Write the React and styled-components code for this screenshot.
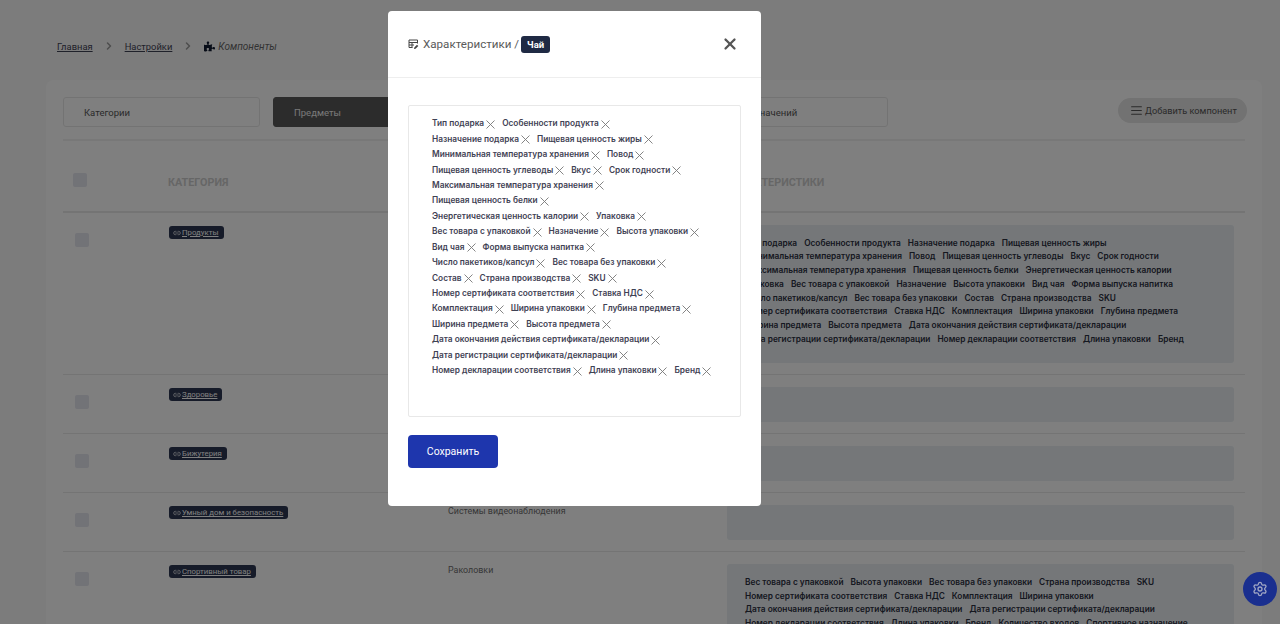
import React from 'react';
import styled, { createGlobalStyle } from 'styled-components';
import { AlignJustify, ChevronRight, Link2, Settings, X } from 'lucide-react';
import { FaPuzzlePiece } from 'react-icons/fa';

const Global = createGlobalStyle`
  html, body { margin: 0; height: 100%; overflow: hidden; background: #f9f9f9; }
  body { font-family: Roboto, "Liberation Sans", sans-serif; }
  * { box-sizing: border-box; }
`;

const Page = styled.div`
  height: 624px;
  overflow: hidden;
  padding: 39px 18px 0 46px;
`;
const Crumbs = styled.nav`
  display: flex;
  align-items: center;
  height: 14px;
  margin: 0 0 27px 11px;
  font-size: 9.4px;
  color: #3f4254;
`;
const CrumbLink = styled.a`
  text-decoration: underline;
`;
const CrumbSep = styled.span`
  display: flex;
  width: 32px;
  justify-content: center;
  color: #9a9a9a;
`;
const CrumbCurrent = styled.span`
  display: flex;
  align-items: center;
  gap: 3px;
  font-size: 10px;
  font-style: italic;
  color: #666;
  svg { color: #111a30; }
`;
const Card = styled.main`
  background: #fff;
  border-radius: 8px;
  padding: 17px 17px 0;
  height: 700px;
`;
const Toolbar = styled.div`
  display: flex;
  align-items: flex-start;
  justify-content: space-between;
  height: 44px;
  border-bottom: 2px solid #f0f0f0;
`;
const Tabs = styled.div`
  display: flex;
  gap: 13px;
`;
const Tab = styled.div`
  width: ${p => p.$w || 197}px;
  height: 30px;
  display: flex;
  align-items: center;
  padding-left: ${p => p.$pad || 20}px;
  font-size: 9.5px;
  border-radius: 3px;
  border: 1px solid ${p => (p.$active ? '#585858' : '#e7e7e7')};
  background: ${p => (p.$active ? '#585858' : '#fff')};
  color: ${p => (p.$active ? '#f0f0f0' : '#555')};
`;
const AddButton = styled.button`
  display: flex;
  flex: none;
  align-items: center;
  gap: 2px;
  height: 25px;
  width: 129px;
  margin: 1px -2px 0 0;
  padding: 0 0 0 12px;
  border: 0;
  border-radius: 13px;
  background: #e4e4e4;
  color: #555;
  white-space: nowrap;
  font: 9.2px Roboto, sans-serif;
`;
const grid = `
  display: grid;
  grid-template-columns: 105px 280px 279px 1fr;
`;
const HeadRow = styled.div`
  ${grid}
  height: 72px;
  align-items: center;
  border-bottom: 2px solid #e8e8e8;
`;
const HeadCell = styled.div`
  font-size: 10.8px;
  font-weight: 700;
  color: #cdcdcd;
  padding-top: 13px;
`;
const Check = styled.span`
  display: block;
  width: 14px;
  height: 14px;
  border-radius: 2px;
  background: #e4e6ef;
  margin-left: ${p => (p.$head ? 10 : 12)}px;
  margin-top: 8px;
`;
const Row = styled.div`
  ${grid}
  padding-top: 12px;
  padding-bottom: 11px;
  border-bottom: 1px solid #e8e8e8;
`;
const Cat = styled.div`
  display: flex;
  align-items: flex-start;
`;
const Chip = styled.a`
  display: inline-flex;
  align-items: center;
  gap: 1px;
  height: 13px;
  margin: 1px 0 0 1px;
  padding: 0 5px 0 4px;
  border-radius: 3px;
  background: #2c3652;
  color: #fff;
  font-size: 7.8px;
  line-height: 13px;
  text-decoration: underline;
`;
const Sub = styled.div`
  font-size: 8.9px;
  color: #6e6e6e;
  line-height: 12px;
`;
const ValueBox = styled.div`
  display: flex;
  flex-wrap: wrap;
  align-content: flex-start;
  column-gap: 7px;
  min-height: 35px;
  width: 507px;
  padding: ${p => (p.$filled ? '11.5px 18px 16.5px' : '0')};
  background: #eaeff3;
  border-radius: 3px;
`;
const ValueTag = styled.span`
  font-family: Inter, Roboto, sans-serif;
  font-size: 8.3px;
  font-weight: 600;
  line-height: 13.8px;
  color: #2b3040;
  white-space: nowrap;
`;
const Backdrop = styled.div`
  position: fixed;
  inset: 0;
  background: rgba(0, 0, 0, 0.5);
`;
const Modal = styled.section`
  position: fixed;
  left: 388px;
  top: 11px;
  width: 373px;
  height: 495px;
  background: #fff;
  border-radius: 4px;
`;
const ModalHeader = styled.header`
  display: flex;
  align-items: center;
  justify-content: space-between;
  height: 67px;
  padding: 0 22px 0 20px;
  border-bottom: 1px solid #eee;
`;
const Title = styled.h2`
  display: flex;
  align-items: center;
  margin: 0;
  font-size: 11.6px;
  font-weight: 400;
  color: #5a5a5a;
  svg { margin-right: 4px; }
`;
const TitleChip = styled.span`
  display: inline-flex;
  align-items: center;
  height: 17px;
  margin-left: 2px;
  padding: 0 6px;
  border-radius: 3px;
  background: #1f2a44;
  color: #fff;
  font-size: 9.5px;
  font-weight: 700;
`;
const CloseBtn = styled.button`
  display: flex;
  border: 0;
  padding: 0;
  background: none;
  color: #555;
`;
const ModalBody = styled.div`
  padding: 27px 20px 0;
`;
const TagField = styled.div`
  height: 312px;
  padding: 9.5px 19px 0 23px;
  border: 1px solid #e8e8e8;
  border-radius: 2px;
`;
const TagLine = styled.div`
  display: flex;
  height: 15.44px;
`;
const Tag = styled.span`
  display: inline-flex;
  align-items: center;
  margin-right: 7px;
  font-family: Inter, Roboto, sans-serif;
  font-size: 8.3px;
  font-weight: 600;
  color: #3f4254;
  white-space: nowrap;
  svg { margin: 2px 0 0 2px; color: #777; }
`;
const SaveBtn = styled.button`
  display: block;
  width: 90px;
  height: 33px;
  margin-top: 18px;
  border: 0;
  border-radius: 4px;
  background: #1e36ad;
  color: #fff;
  font: 10.5px Roboto, sans-serif;
`;
const Fab = styled.button`
  position: fixed;
  left: 1243px;
  top: 572px;
  width: 34px;
  height: 34px;
  display: flex;
  align-items: center;
  justify-content: center;
  padding: 0;
  border: 0;
  border-radius: 50%;
  background: #1a2f8f;
  color: #a0a6c4;
`;

const Cross = () => (
  <svg width="9" height="9" viewBox="0 0 9 9" fill="none" stroke="currentColor" strokeWidth="0.9">
    <path d="M.5.5l8 8M8.5.5l-8 8" />
  </svg>
);
const TableEdit = () => (
  <svg width="11" height="11" viewBox="0 0 11 11" fill="none" stroke="#444" strokeWidth="1">
    <path d="M4.5 8.5H1V1h8.5v3.5M1 3.5h8.5M1 6h5M4 3.5v5" />
    <path d="M6 10l.3-1.6L9 5.8l1.3 1.3L7.6 9.7z" fill="#444" stroke="none" />
  </svg>
);

const fieldLines = [
  ['Тип подарка', 'Особенности продукта'],
  ['Назначение подарка', 'Пищевая ценность жиры'],
  ['Минимальная температура хранения', 'Повод'],
  ['Пищевая ценность углеводы', 'Вкус', 'Срок годности'],
  ['Максимальная температура хранения'],
  ['Пищевая ценность белки'],
  ['Энергетическая ценность калории', 'Упаковка'],
  ['Вес товара с упаковкой', 'Назначение', 'Высота упаковки'],
  ['Вид чая', 'Форма выпуска напитка'],
  ['Число пакетиков/капсул', 'Вес товара без упаковки'],
  ['Состав', 'Страна производства', 'SKU'],
  ['Номер сертификата соответствия', 'Ставка НДС'],
  ['Комплектация', 'Ширина упаковки', 'Глубина предмета'],
  ['Ширина предмета', 'Высота предмета'],
  ['Дата окончания действия сертификата/декларации'],
  ['Дата регистрации сертификата/декларации'],
  ['Номер декларации соответствия', 'Длина упаковки', 'Бренд'],
];
const full = fieldLines.flat();
const sport = [
  'Вес товара с упаковкой', 'Высота упаковки', 'Вес товара без упаковки', 'Страна производства', 'SKU',
  'Номер сертификата соответствия', 'Ставка НДС', 'Комплектация', 'Ширина упаковки',
  'Дата окончания действия сертификата/декларации', 'Дата регистрации сертификата/декларации',
  'Номер декларации соответствия', 'Длина упаковки', 'Бренд', 'Количество входов', 'Спортивное назначение',
];
const rows = [
  { cat: 'Продукты', sub: 'Чай', values: full },
  { cat: 'Здоровье', sub: 'Витамины', values: [] },
  { cat: 'Бижутерия', sub: 'Украшения', values: [] },
  { cat: 'Умный дом и безопасность', sub: 'Системы видеонаблюдения', values: [] },
  { cat: 'Спортивный товар', sub: 'Раколовки', values: sport },
];

export default function App() {
  return (
    <>
      <Global />
      <Page>
        <Crumbs>
          <CrumbLink>Главная</CrumbLink>
          <CrumbSep><ChevronRight size={12} strokeWidth={3} /></CrumbSep>
          <CrumbLink>Настройки</CrumbLink>
          <CrumbSep><ChevronRight size={12} strokeWidth={3} /></CrumbSep>
          <CrumbCurrent><FaPuzzlePiece size={11} />Компоненты</CrumbCurrent>
        </Crumbs>
        <Card>
          <Toolbar>
            <Tabs>
              <Tab>Категории</Tab>
              <Tab $active>Предметы</Tab>
              <Tab>Характеристики</Tab>
              <Tab $w={195} $pad={26}>Список значений</Tab>
            </Tabs>
            <AddButton><AlignJustify size={13} />Добавить компонент</AddButton>
          </Toolbar>
          <HeadRow>
            <Check $head />
            <HeadCell>КАТЕГОРИЯ</HeadCell>
            <HeadCell>ПРЕДМЕТ</HeadCell>
            <HeadCell>ХАРАКТЕРИСТИКИ</HeadCell>
          </HeadRow>
          {rows.map(r => (
            <Row key={r.cat}>
              <div><Check /></div>
              <Cat><Chip><Link2 size={8} />{r.cat}</Chip></Cat>
              <Sub>{r.sub}</Sub>
              <ValueBox $filled={r.values.length > 0}>
                {r.values.map(v => <ValueTag key={v}>{v}</ValueTag>)}
              </ValueBox>
            </Row>
          ))}
        </Card>
      </Page>
      <Backdrop />
      <Modal>
        <ModalHeader>
          <Title><TableEdit />Характеристики /<TitleChip>Чай</TitleChip></Title>
          <CloseBtn><X size={18} strokeWidth={3} /></CloseBtn>
        </ModalHeader>
        <ModalBody>
          <TagField>
            {fieldLines.map(line => (
              <TagLine key={line[0]}>
                {line.map(t => <Tag key={t}>{t}<Cross /></Tag>)}
              </TagLine>
            ))}
          </TagField>
          <SaveBtn>Сохранить</SaveBtn>
        </ModalBody>
      </Modal>
      <Fab><Settings size={16} /></Fab>
    </>
  );
}
